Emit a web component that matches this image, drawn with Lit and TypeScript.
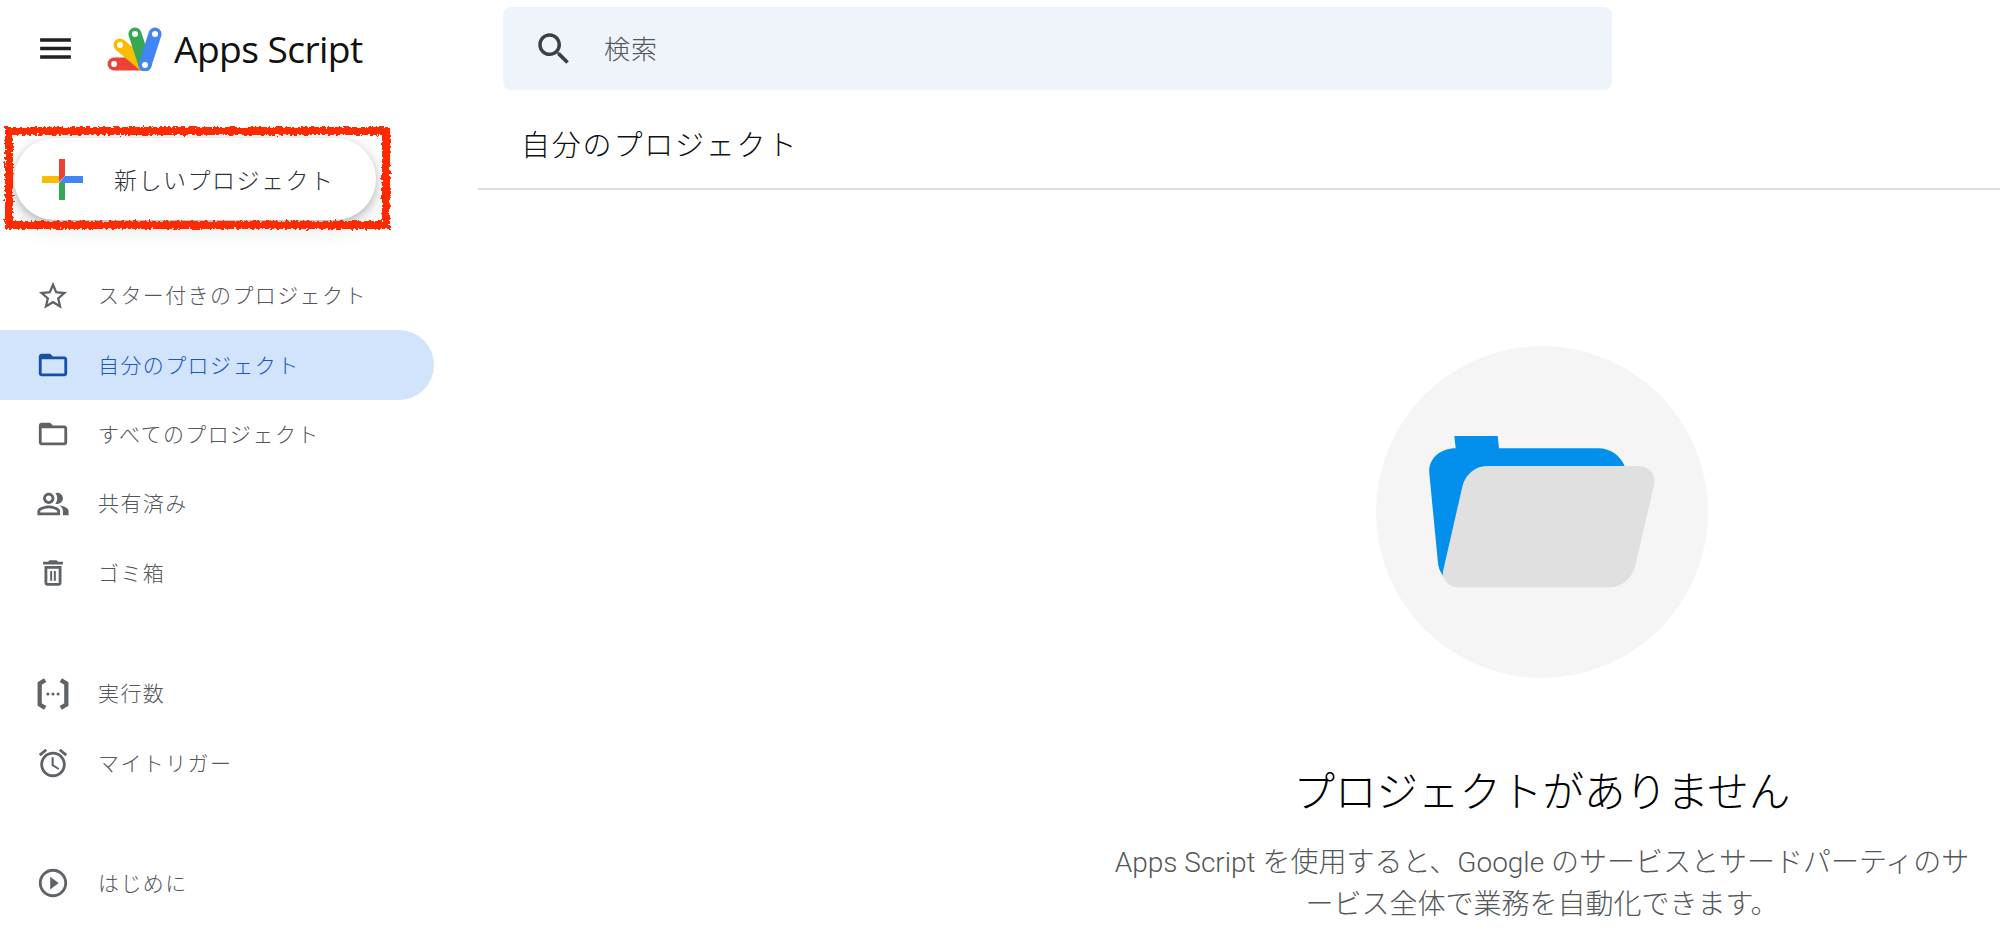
import { LitElement, html, css, svg } from 'lit';
import { customElement } from 'lit/decorators.js';

const icons = {
  star: svg`<path d="M22 9.24l-7.19-.62L12 2 9.19 8.63 2 9.24l5.46 4.73L5.82 21 12 17.27 18.18 21l-1.63-7.03L22 9.24zM12 15.4l-3.76 2.27 1-4.28-3.32-2.88 4.38-.38L12 6.1l1.71 4.04 4.38.38-3.32 2.88 1 4.28L12 15.4z"/>`,
  folder: svg`<path d="M20 6h-8l-2-2H4c-1.1 0-1.99.9-1.99 2L2 18c0 1.1.9 2 2 2h16c1.1 0 2-.9 2-2V8c0-1.1-.9-2-2-2zm0 12H4V8h16v10z"/>`,
  people: svg`<path d="M16.67 13.13C18.04 14.06 19 15.32 19 17v3h4v-3c0-2.18-3.57-3.47-6.33-3.87zM15 12c2.21 0 4-1.79 4-4s-1.79-4-4-4c-.47 0-.91.1-1.33.24C14.5 5.27 15 6.58 15 8s-.5 2.73-1.33 3.76c.42.14.86.24 1.33.24zM9 12c2.21 0 4-1.79 4-4s-1.79-4-4-4-4 1.79-4 4 1.79 4 4 4zm0-6c1.1 0 2 .9 2 2s-.9 2-2 2-2-.9-2-2 .9-2 2-2zm0 7c-2.67 0-8 1.34-8 4v3h16v-3c0-2.66-5.33-4-8-4zm6 5H3v-.99C3.2 16.29 6.3 15 9 15s5.8 1.29 6 2v1z"/>`,
  trash: svg`<path d="M6 19c0 1.1.9 2 2 2h8c1.1 0 2-.9 2-2V7H6v12zM8 9h8v10H8V9zm7.5-5l-1-1h-5l-1 1H5v2h14V4h-3.5z"/><path d="M10 10.5h1.4v7H10zM12.6 10.5H14v7h-1.4z"/>`,
  runs: svg`<path d="M6.5 2.2L2.6 4.6v14.8l3.9 2.4M17.5 2.2l3.9 2.4v14.8l-3.9 2.4" fill="none" stroke="currentColor" stroke-width="3"/><circle cx="8.4" cy="12" r="1.1"/><circle cx="12" cy="12" r="1.1"/><circle cx="15.6" cy="12" r="1.1"/>`,
  alarm: svg`<path d="M22 5.72l-4.6-3.86-1.29 1.53 4.6 3.86L22 5.72zM7.88 3.39L6.6 1.86 2 5.71l1.29 1.53 4.59-3.85zM12.5 8H11v6l4.75 2.85.75-1.23-4-2.37V8zM12 4c-4.97 0-9 4.03-9 9s4.02 9 9 9c4.97 0 9-4.03 9-9s-4.03-9-9-9zm0 16c-3.87 0-7-3.13-7-7s3.13-7 7-7 7 3.13 7 7-3.13 7-7 7z"/>`,
  play: svg`<path d="M10 16.5l6-4.5-6-4.5v9zM12 2C6.48 2 2 6.48 2 12s4.48 10 10 10 10-4.48 10-10S17.52 2 12 2zm0 18c-4.41 0-8-3.59-8-8s3.59-8 8-8 8 3.59 8 8-3.59 8-8 8z"/>`,
};

type IconName = keyof typeof icons;

@customElement('app-root')
export class AppRoot extends LitElement {
  static styles = css`
    :host {
      display: grid;
      grid-template-columns: 478px 1fr;
      height: 930px;
      overflow: hidden;
      background: #fff;
      font-family: "Noto Sans CJK JP", "Noto Sans", sans-serif;
      font-weight: 300;
    }

    .sidebar {
      display: flex;
      flex-direction: column;
    }

    .brand {
      display: flex;
      align-items: center;
      height: 97px;
      padding-left: 35px;
      box-sizing: border-box;
    }
    .menu {
      width: 41px;
      height: 41px;
      fill: #202124;
    }
    .logo {
      width: 56px;
      height: 44px;
      margin-left: 31px;
    }
    .brand-name {
      margin-left: 11px;
      font-family: "Open Sans", sans-serif;
      font-weight: 400;
      font-size: 37.2px;
      letter-spacing: -0.6px;
      color: #111;
      line-height: 1;
    }

    .new-wrap {
      position: relative;
      width: 362px;
      height: 82px;
      margin: 41px 0 0 14px;
    }
    .new {
      display: flex;
      align-items: center;
      height: 100%;
      box-sizing: border-box;
      padding-left: 28px;
      border-radius: 41px;
      background: #fff;
      box-shadow: 0 3px 8px rgba(60, 64, 67, 0.3), 0 8px 22px rgba(60, 64, 67, 0.14);
      font-size: 23px;
      letter-spacing: 1.5px;
      color: #2f3235;
    }
    .plus {
      width: 41px;
      height: 41px;
      margin-right: 31px;
    }
    .mark {
      position: absolute;
      left: -14px;
      top: -12px;
      width: 390px;
      height: 112px;
      overflow: visible;
      pointer-events: none;
    }

    .nav {
      display: flex;
      flex-direction: column;
      margin-top: 41px;
      padding-right: 44px;
    }
    .row {
      display: flex;
      align-items: center;
      height: 69.4px;
      padding-left: 36px;
      border-radius: 0 35px 35px 0;
      font-size: 21px;
      letter-spacing: 1.4px;
      color: #53575b;
    }
    .row svg {
      width: 34px;
      height: 34px;
      margin-right: 28px;
      fill: #5f6368;
      color: #5f6368;
      flex: none;
    }
    .row span {
      padding-bottom: 3px;
    }
    .row.active {
      background: #d2e3fc;
      color: #1a56c4;
    }
    .row.active svg {
      fill: #174ea6;
    }
    .gap {
      height: 51px;
    }

    .main {
      display: flex;
      flex-direction: column;
      min-width: 0;
    }
    .search {
      display: flex;
      align-items: center;
      width: 1109px;
      height: 83px;
      margin: 7px 0 0 25px;
      padding-left: 30px;
      box-sizing: border-box;
      border-radius: 8px;
      background: #eff3fa;
      font-size: 26px;
      letter-spacing: 1px;
      color: #53575b;
    }
    .search svg {
      width: 42px;
      height: 42px;
      margin-right: 29px;
      fill: #3c4043;
    }
    .search span {
      padding-bottom: 3px;
    }
    .title {
      display: flex;
      align-items: center;
      box-sizing: border-box;
      height: 100px;
      padding: 8px 0 0 43px;
      border-bottom: 2px solid #dadce0;
      font-size: 29px;
      letter-spacing: 1.8px;
      color: #111;
    }

    .empty {
      display: flex;
      flex-direction: column;
      align-items: center;
      width: 870px;
      margin-left: 629px;
      padding-top: 156px;
      text-align: center;
    }
    .art {
      width: 332px;
      height: 332px;
    }
    .empty h2 {
      margin: 81px 0 0;
      font-size: 41.5px;
      font-weight: 300;
      line-height: 60px;
      color: #000;
    }
    .empty p {
      margin: 23px 0 0;
      font-family: Roboto, "Noto Sans CJK JP", sans-serif;
      font-size: 28px;
      line-height: 42px;
      color: #53575b;
    }
  `;

  private row(icon: IconName, label: string, active = false) {
    return html`<div class="row ${active ? 'active' : ''}">
      <svg viewBox="0 0 24 24">${icons[icon]}</svg>
      <span>${label}</span>
    </div>`;
  }

  render() {
    return html`
      <aside class="sidebar">
        <div class="brand">
          <svg class="menu" viewBox="0 0 24 24"><path d="M3 18h18v-2H3v2zm0-5h18v-2H3v2zm0-7v2h18V6H3z"/></svg>
          <svg class="logo" viewBox="0 0 56 44" fill="none" stroke-linecap="round">
            <path d="M7 37H38" stroke="#ea4335" stroke-width="13"/>
            <path d="M13 18L37 38" stroke="#fbbc04" stroke-width="13"/>
            <path d="M28 7L38 38" stroke="#34a853" stroke-width="13"/>
            <path d="M48 7L38 38" stroke="#4285f4" stroke-width="13"/>
            <g fill="#fff">
              <circle cx="7" cy="37" r="3"/>
              <circle cx="13" cy="18" r="3"/>
              <circle cx="28" cy="7" r="3"/>
              <circle cx="48" cy="7" r="3"/>
              <circle cx="38" cy="38" r="3"/>
            </g>
          </svg>
          <span class="brand-name">Apps Script</span>
        </div>

        <div class="new-wrap">
          <div class="new">
            <svg class="plus" viewBox="0 0 41 41">
              <path d="M0 17H17V24H0z" fill="#fbbc04"/>
              <path d="M17 0H23V17L17 23z" fill="#ea4335"/>
              <path d="M23 17H41V24H17z" fill="#4285f4"/>
              <path d="M17 24H23V41H17z" fill="#34a853"/>
            </svg>
            <span>新しいプロジェクト</span>
          </div>
          <svg class="mark" viewBox="0 0 390 112">
            <defs>
              <filter id="rough" x="-5%" y="-15%" width="110%" height="130%">
                <feTurbulence type="fractalNoise" baseFrequency="0.35" numOctaves="2" seed="4"/>
                <feDisplacementMap in="SourceGraphic" scale="6"/>
              </filter>
            </defs>
            <rect x="9" y="5" width="377" height="94" fill="none" stroke="#ff2a00" stroke-width="8" filter="url(#rough)"/>
          </svg>
        </div>

        <nav class="nav">
          ${this.row('star', 'スター付きのプロジェクト')}
          ${this.row('folder', '自分のプロジェクト', true)}
          ${this.row('folder', 'すべてのプロジェクト')}
          ${this.row('people', '共有済み')}
          ${this.row('trash', 'ゴミ箱')}
          <div class="gap"></div>
          ${this.row('runs', '実行数')}
          ${this.row('alarm', 'マイトリガー')}
          <div class="gap"></div>
          ${this.row('play', 'はじめに')}
        </nav>
      </aside>

      <main class="main">
        <div class="search">
          <svg viewBox="0 0 24 24"><path d="M15.5 14h-.79l-.28-.27C15.41 12.59 16 11.11 16 9.5 16 5.91 13.09 3 9.5 3S3 5.91 3 9.5 5.91 16 9.5 16c1.61 0 3.09-.59 4.23-1.57l.27.28v.79l5 4.99L20.49 19l-4.99-5zm-6 0C7.01 14 5 11.99 5 9.5S7.01 5 9.5 5 14 7.01 14 9.5 11.99 14 9.5 14z"/></svg>
          <span>検索</span>
        </div>
        <div class="title">自分のプロジェクト</div>
        <section class="empty">
          <svg class="art" viewBox="0 0 332 332">
            <circle cx="166" cy="166" r="166" fill="#f5f5f5"/>
            <path d="M78.3 90H121.7L123 102.3H222.3C235 102.3 245 110 249 121V140H90L68 230.7C64 226 62 221 61.7 214L53.3 127.3C52 113 64 102.3 79.7 102.3z" fill="#038fec"/>
            <path d="M110.7 120H262.3C273 120 280.5 128 278 139L259 220.7C256 232 246 241.3 234 241.3H82.3C72 241.3 65 232 67.3 224L86.3 140.7C89 129 99 120 110.7 120z" fill="#e0e0e0"/>
          </svg>
          <h2>プロジェクトがありません</h2>
          <p>Apps Script を使用すると、Google のサービスとサードパーティのサ<br>ービス全体で業務を自動化できます。</p>
        </section>
      </main>
    `;
  }
}
